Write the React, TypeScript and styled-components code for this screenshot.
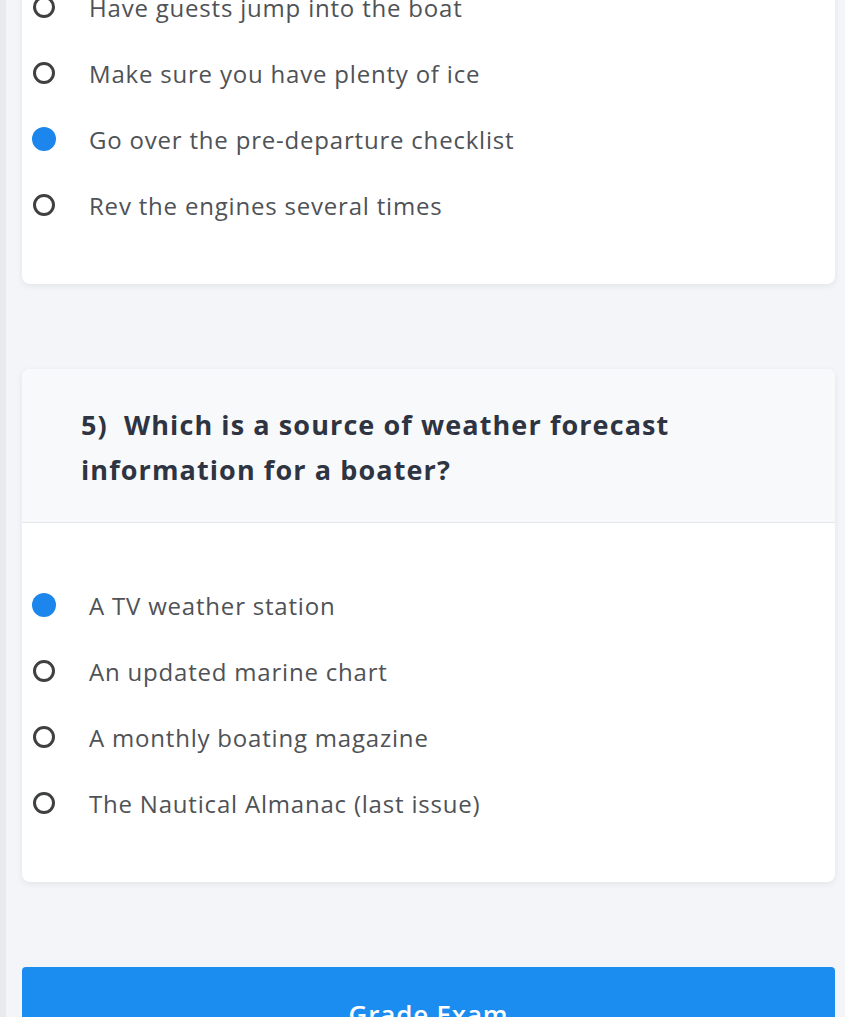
import { createGlobalStyle, styled } from "styled-components";

const GlobalStyle = createGlobalStyle`
  html, body {
    margin: 0;
    padding: 0;
    background: #f4f5f8;
    font-family: "Open Sans", Lato, sans-serif;
  }
  body {
    overflow: hidden;
  }
`;

const Page = styled.div`
  display: flex;
  flex-direction: column;
  gap: 85px;
  height: 1017px;
  overflow: hidden;
  box-sizing: border-box;
  padding: 0 10px 0 16px;
  border-left: 6px solid #e9eaef;
`;

const Card = styled.section<{ $cut?: boolean }>`
  background: #fff;
  border-radius: 8px;
  box-shadow: 0 2px 6px rgba(30, 40, 60, 0.08);
  margin-top: ${(p) => (p.$cut ? "-26px" : "0")};
  flex-shrink: 0;
`;

const Header = styled.header`
  background: #f8f9fb;
  border-radius: 8px 8px 0 0;
  border-bottom: 1px solid #e4e6eb;
  padding: 33px 0 0 59px;
  height: 154px;
  box-sizing: border-box;
`;

const Question = styled.h2`
  margin: 0;
  max-width: 700px;
  font-size: 27px;
  font-weight: 700;
  line-height: 45px;
  color: #2e3441;
  letter-spacing: 1.1px;
`;

const Options = styled.ul<{ $top: number }>`
  list-style: none;
  margin: 0;
  padding: ${(p) => p.$top}px 0 46px 0;
`;

const Option = styled.li`
  display: flex;
  align-items: center;
  height: 66px;
  font-size: 24px;
  letter-spacing: 0.8px;
  color: #4f5256;
`;

const RadioSlot = styled.span`
  width: 44px;
  margin-right: 23px;
  display: flex;
  justify-content: center;
  flex-shrink: 0;
`;

const Radio = styled.span<{ $on?: boolean }>`
  display: block;
  box-sizing: border-box;
  width: ${(p) => (p.$on ? "24px" : "22px")};
  height: ${(p) => (p.$on ? "24px" : "22px")};
  border-radius: 50%;
  background: ${(p) => (p.$on ? "#1d86ec" : "transparent")};
  border: ${(p) => (p.$on ? "none" : "3px solid #3f4042")};
`;

const GradeButton = styled.button`
  flex-shrink: 0;
  background: #1b8cf0;
  border: none;
  border-radius: 4px;
  color: #fff;
  font-family: "Open Sans", sans-serif;
  font-size: 26px;
  font-weight: 600;
  line-height: 30px;
  padding: 32px 0 36px;
  letter-spacing: 0.8px;
`;

const q4 = [
  { t: "Have guests jump into the boat" },
  { t: "Make sure you have plenty of ice" },
  { t: "Go over the pre-departure checklist", on: true },
  { t: "Rev the engines several times" },
];

const q5 = [
  { t: "A TV weather station", on: true },
  { t: "An updated marine chart" },
  { t: "A monthly boating magazine" },
  { t: "The Nautical Almanac (last issue)" },
];

export default function App() {
  return (
    <>
      <GlobalStyle />
      <Page>
        <Card $cut>
          <Options $top={0}>
            {q4.map((o) => (
              <Option key={o.t}>
                <RadioSlot>
                  <Radio $on={o.on} />
                </RadioSlot>
                {o.t}
              </Option>
            ))}
          </Options>
        </Card>
        <Card>
          <Header>
            <Question>
              5)&nbsp; Which is a source of weather forecast information for a boater?
            </Question>
          </Header>
          <Options $top={49}>
            {q5.map((o) => (
              <Option key={o.t}>
                <RadioSlot>
                  <Radio $on={o.on} />
                </RadioSlot>
                {o.t}
              </Option>
            ))}
          </Options>
        </Card>
        <GradeButton>Grade Exam</GradeButton>
      </Page>
    </>
  );
}
